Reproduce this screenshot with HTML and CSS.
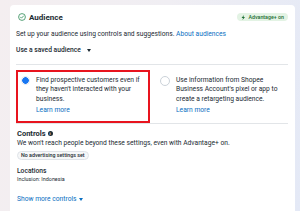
FILE: index.html
```html
<!DOCTYPE html>
<html>
<head>
<meta charset="utf-8">
<link rel="stylesheet" href="styles.css">
</head>
<body>
<div class="card">
  <div class="header">
    <div class="title">
      <svg class="check" width="8" height="8" viewBox="0 0 16 16"><circle cx="8" cy="8" r="6.8" fill="none" stroke="#2e8b57" stroke-width="1.6"/><path d="M5 8.3l2 2 4-4.3" fill="none" stroke="#2e8b57" stroke-width="1.6" stroke-linecap="round" stroke-linejoin="round"/></svg>
      <span>Audience</span>
    </div>
    <div class="badge">
      <svg width="5" height="5" viewBox="0 0 10 10"><path d="M6 0L1 6h3l-1 4 5-6H5z" fill="#1f6f35"/></svg>
      <span>Advantage+ on</span>
    </div>
  </div>
  <p class="desc">Set up your audience using controls and suggestions. <a class="link">About audiences</a></p>
  <div class="saved">Use a saved audience <span class="caret"></span></div>
  <div class="options">
    <div class="option selected">
      <span class="radio on"></span>
      <div class="otext">
        <p>Find prospective customers even if they haven't interacted with your business.</p>
        <a class="link">Learn more</a>
      </div>
    </div>
    <div class="option">
      <span class="radio"></span>
      <div class="otext">
        <p>Use information from Shopee Business Account's pixel or app to create a retargeting audience.</p>
        <a class="link">Learn more</a>
      </div>
    </div>
  </div>
  <div class="controls">
    <div class="ctitle">Controls <span class="info">i</span></div>
    <p class="csub">We won't reach people beyond these settings, even with Advantage+ on.</p>
    <span class="pill">No advertising settings set</span>
    <div class="loc">Locations</div>
    <div class="incl">Inclusion: Indonesia</div>
    <a class="link more">Show more controls <span class="caret blue"></span></a>
  </div>
</div>
</body>
</html>
```
FILE: styles.css
```css
* { box-sizing: border-box; }
html, body { margin: 0; padding: 0; }
body {
  width: 300px; height: 211px; overflow: hidden;
  background: linear-gradient(100deg, #f4eef0 0%, #f0eef3 50%, #e4e9f6 100%);
  font-family: Roboto, "Liberation Sans", sans-serif;
  color: #1c2b33;
  font-size: 6.7px;
}
.card {
  margin: 5px 5px 0 10px;
  background: #fff;
  border-radius: 4px;
  padding: 7px 7px 0 6px;
  height: 210px;
}
.header { display: flex; justify-content: space-between; align-items: center; height: 10px; }
.title { display: flex; align-items: center; gap: 3px; padding-left: 2px; font-weight: 700; font-size: 8px; }
.check { display: block; }
.badge {
  display: flex; align-items: center; gap: 2px;
  background: #e3f3e4; color: #1f6f35; border-radius: 5px;
  height: 8px; padding: 0 4px 0 4px; font-size: 5.3px; font-weight: 500;
}
.badge svg { display: block; }
p { margin: 0; }
.desc { margin-top: 8px; line-height: 9px; }
.link { color: #0a6fc2; }
.saved { margin-top: 7px; line-height: 9px; font-weight: 500; padding-bottom: 9px; border-bottom: 1px solid #e2e5e8; display: flex; align-items: center; gap: 3px; }
.caret { display: inline-block; width: 0; height: 0; border-left: 2.5px solid transparent; border-right: 2.5px solid transparent; border-top: 3px solid #1c2b33; margin-left: 3px; }
.caret.blue { border-top-color: #0a6fc2; margin-left: 1px; }
.options { display: grid; grid-template-columns: 1fr 1fr; gap: 4px; margin-top: 5px; border-bottom: 1px solid #e2e5e8; }
.option { display: flex; gap: 6px; padding: 4px 4px 3px 3px; border: 2px solid transparent; height: 53px; }
.option.selected { border-color: #e8141e; }
.radio { flex: none; width: 9px; height: 9px; border-radius: 50%; border: 1px solid #cbd2d9; background: #fff; margin-top: 0px; }
.radio.on { border: 1px solid #dde6f2; background: radial-gradient(circle, #1877f2 0 3.2px, #fff 3.6px); }
.option:not(.selected) .radio { width: 10px; height: 10px; margin-left: 1px; }
.otext { line-height: 9.3px; }
.otext .link { display: block; margin-top: 2px; }
.controls { padding-top: 5px; padding-left: 1px; }
.ctitle { font-weight: 700; font-size: 7.5px; line-height: 9px; display: flex; align-items: center; gap: 2px; }
.info { display: inline-flex; width: 5px; height: 5px; border-radius: 50%; background: #1c2b33; color: #fff; font-size: 4px; align-items: center; justify-content: center; }
.csub { line-height: 9px; margin-top: 1px; }
.pill { display: inline-block; margin-top: 3px; border: 1px solid #dfe3e8; background: #f6f7f8; border-radius: 5px; padding: 0 3px; font-size: 5.3px; line-height: 7px; font-weight: 500; }
.loc { margin-top: 7px; font-weight: 500; line-height: 9px; }
.incl { font-size: 5.4px; line-height: 7px; }
.more { display: block; margin-top: 12px; line-height: 9px; padding-bottom: 7px; border-bottom: 1px solid #e2e5e8; }
```
